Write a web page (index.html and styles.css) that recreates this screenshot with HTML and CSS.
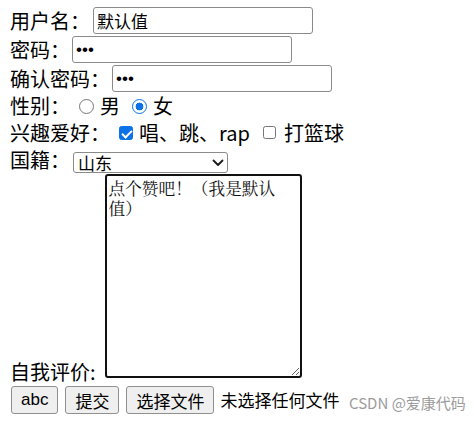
FILE: index.html
```html
<!DOCTYPE html>
<html lang="zh-CN">
<head>
<meta charset="utf-8">
<title>表单</title>
<link rel="stylesheet" href="styles.css">
</head>
<body>
<form class="form">
  <div class="row row-field">
    <span class="label">用户名：</span>
    <input class="text-input text-input-first" type="text" value="默认值">
  </div>
  <div class="row row-field">
    <span class="label">密码：</span>
    <input class="text-input" type="password" value="123">
  </div>
  <div class="row row-field">
    <span class="label">确认密码：</span>
    <input class="text-input" type="password" value="123">
  </div>
  <div class="row row-gender">
    <span class="label">性别：</span>
    <input class="radio" type="radio" name="sex">
    <span class="opt">男</span>
    <input class="radio radio-next" type="radio" name="sex" checked>
    <span class="opt">女</span>
  </div>
  <div class="row row-hobby">
    <span class="label">兴趣爱好：</span>
    <input class="check" type="checkbox" checked>
    <span class="opt">唱、跳、rap</span>
    <input class="check check-next" type="checkbox">
    <span class="opt">打篮球</span>
  </div>
  <div class="row row-country">
    <span class="label">国籍：</span>
    <span class="select-wrap">
      <select class="select">
        <option>山东</option>
        <option>北京</option>
        <option>上海</option>
      </select>
      <svg class="chevron" width="12" height="8" viewBox="0 0 12 8" aria-hidden="true"><path d="M1.5 1.5 L6 6 L10.5 1.5" fill="none" stroke="#1a1a1a" stroke-width="1.8" stroke-linecap="round" stroke-linejoin="round"/></svg>
    </span>
  </div>
  <div class="row row-comment">
    <span class="label">自我评价:</span>
    <textarea class="comment">点个赞吧！（我是默认值）</textarea>
  </div>
  <div class="row row-actions">
    <button class="btn btn-first" type="button">abc</button>
    <button class="btn" type="submit">提交</button>
    <button class="btn" type="button">选择文件</button>
    <span class="file-status">未选择任何文件</span>
  </div>
</form>
<span class="watermark">CSDN @爱康代码</span>
</body>
</html>
```
FILE: styles.css
```css
* {
  box-sizing: border-box;
}

html,
body {
  margin: 0;
  padding: 0;
  background: #fff;
}

body {
  position: relative;
  min-height: 424px;
  font-family: "Noto Sans CJK SC", "Liberation Sans", sans-serif;
  font-size: 20px;
  color: #000;
}

.form {
  padding: 6px 0 0 10px;
}

.row {
  display: flex;
  align-items: center;
  white-space: nowrap;
}

.label,
.opt {
  line-height: 26px;
}

.row-field {
  height: 29px;
}

.row-gender {
  height: 26px;
}

.row-hobby {
  height: 27px;
}

.row-country {
  height: 28px;
}

.text-input {
  width: 220px;
  height: 27px;
  margin: 0 0 0 2px;
  padding: 0 3px;
  border: 1px solid #8a8a8a;
  border-radius: 3px;
  background: #fff;
  font-family: "Liberation Sans", "Noto Sans CJK SC", sans-serif;
  font-size: 17px;
  color: #000;
  outline: none;
}

.text-input-first {
  margin-left: 3px;
}

.radio {
  appearance: none;
  -webkit-appearance: none;
  flex: none;
  width: 15px;
  height: 15px;
  margin: 0 6px 0 9px;
  border: 1px solid #767676;
  border-radius: 50%;
  background: #fff;
}

.radio:checked {
  border: 1.5px solid #0b72e7;
  background: radial-gradient(circle, #0b72e7 0 3.6px, #fff 4.2px);
}

.radio-next {
  margin-left: 12px;
}

.check {
  appearance: none;
  -webkit-appearance: none;
  position: relative;
  flex: none;
  width: 14px;
  height: 14px;
  margin: 0 6px 0 9px;
  border: 1px solid #767676;
  border-radius: 2.5px;
  background: #fff;
}

.check:checked {
  border-color: #0b72e7;
  background: #0b72e7;
}

.check:checked::after {
  content: "";
  position: absolute;
  left: 4px;
  top: 1px;
  width: 4px;
  height: 8px;
  border-right: 2px solid #fff;
  border-bottom: 2px solid #fff;
  transform: rotate(45deg);
}

.check-next {
  width: 13px;
  height: 13px;
  margin-left: 13px;
  margin-right: 8px;
}

.select-wrap {
  position: relative;
  display: block;
  margin: 4px 0 0 3px;
}

.select {
  display: block;
  width: 155px;
  height: 21px;
  margin: 0;
  padding: 0 0 0 4px;
  border: 1px solid #8a8a8a;
  border-radius: 3px;
  background: #fff;
  font-family: "Noto Sans CJK SC", sans-serif;
  font-size: 17px;
  line-height: 19px;
  color: #000;
  appearance: none;
  -webkit-appearance: none;
  outline: none;
}

.chevron {
  position: absolute;
  left: 139px;
  top: 7px;
  pointer-events: none;
}

.row-comment {
  align-items: flex-end;
}

.comment {
  width: 197px;
  height: 204px;
  margin: 0 0 7px 9px;
  padding: 2px 18px 2px 2px;
  border: 2px solid #111;
  border-radius: 3px;
  background: #fff;
  font-family: "Noto Serif CJK SC", "Noto Sans CJK SC", serif;
  font-size: 16.67px;
  line-height: 20px;
  color: #111;
  outline: none;
}

.row-actions {
  height: 30px;
  gap: 7px;
}

.btn {
  height: 28px;
  margin: 0;
  padding: 0 9px;
  border: 1px solid #8f8f8f;
  border-radius: 3px;
  background: #efefef;
  font-family: "Liberation Sans", "Noto Sans CJK SC", sans-serif;
  font-size: 17px;
  color: #000;
}

.btn-first {
  margin-left: 1px;
}

.file-status {
  margin-left: -1px;
  font-size: 17px;
  line-height: 26px;
}

.watermark {
  position: absolute;
  left: 349px;
  top: 393px;
  font-family: "Noto Sans CJK SC", sans-serif;
  font-size: 15px;
  line-height: 20px;
  color: #9c9c9c;
}
```
